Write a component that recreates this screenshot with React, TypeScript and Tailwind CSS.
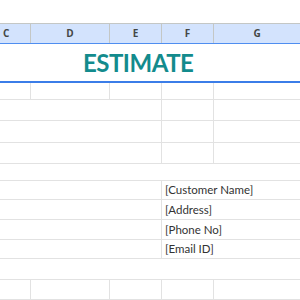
import React from 'react';

const widths = ['w-[31px]', 'w-[79px]', 'w-[52px]', 'w-[52px]', 'w-[86px]'];
const letters = ['C', 'D', 'E', 'F', 'G'];

type Row = { h: string; lines: 'all' | 'right' | 'none' | 'f'; text?: string };

const rows: Row[] = [
  { h: 'h-[17px]', lines: 'all' },
  { h: 'h-[21px]', lines: 'right' },
  { h: 'h-[22px]', lines: 'right' },
  { h: 'h-[21px]', lines: 'right' },
  { h: 'h-[17px]', lines: 'none' },
  { h: 'h-[19px]', lines: 'f', text: '[Customer Name]' },
  { h: 'h-[20px]', lines: 'f', text: '[Address]' },
  { h: 'h-[20px]', lines: 'f', text: '[Phone No]' },
  { h: 'h-[19px]', lines: 'f', text: '[Email ID]' },
  { h: 'h-[21px]', lines: 'none' },
  { h: 'h-[20px]', lines: 'all' },
];

const GridRow: React.FC<{ row: Row }> = ({ row }) => {
  const border = (i: number) => {
    if (row.lines === 'all') return i < 4 ? 'border-r border-[#e2e2e2]' : '';
    if (row.lines === 'right') return i === 2 || i === 3 ? 'border-r border-[#e2e2e2]' : '';
    if (row.lines === 'f') return i === 2 ? 'border-r border-[#e2e2e2]' : '';
    return '';
  };
  return (
    <div className={`flex border-b border-[#e2e2e2] ${row.h}`}>
      {widths.map((w, i) => (
        <div key={i} className={`${w} shrink-0 ${border(i)} flex items-center`}>
          {i === 3 && row.text && (
            <span className="pl-[3px] text-[11.5px] text-[#333] whitespace-nowrap">{row.text}</span>
          )}
        </div>
      ))}
    </div>
  );
};

export default function App() {
  return (
    <div className="w-[300px] h-[300px] overflow-hidden bg-white font-['Lato','Open_Sans',sans-serif]">
      <div className="h-[23px]" />
      <div className="flex h-[21px] bg-[#d3e3fd] border-t border-[#c4c7c5] border-b border-b-[#4f8ef0]">
        {letters.map((l, i) => (
          <div
            key={l}
            className={`${widths[i]} shrink-0 flex items-center ${i === 0 ? 'justify-start pl-[3px]' : 'justify-center'} ${i < 4 ? 'border-r border-[#c4c7c5]' : ''} text-[10px] font-bold text-[#444746] font-['Open_Sans',sans-serif]`}
          >
            {l}
          </div>
        ))}
      </div>
      <div className="h-[39px] border-b-2 border-[#3b7de8] flex items-center pl-[83px]">
        <span className="text-[24px] font-bold text-[#138b8d] tracking-[-0.5px] leading-none">ESTIMATE</span>
      </div>
      {rows.map((r, i) => (
        <GridRow key={i} row={r} />
      ))}
    </div>
  );
}
